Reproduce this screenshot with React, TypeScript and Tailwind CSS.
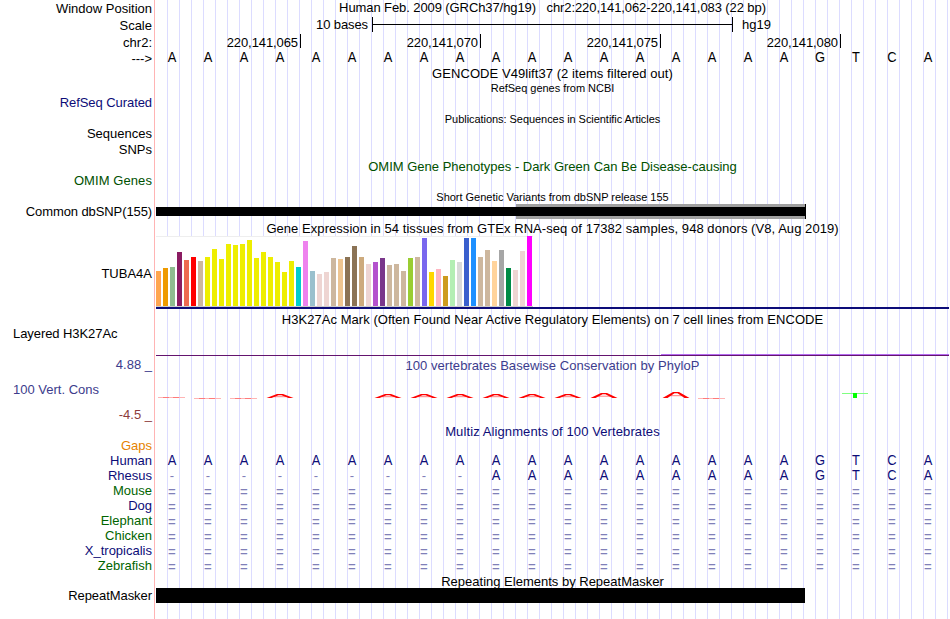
import clsx from "clsx";
import type { ReactNode } from "react";

const SEQUENCE = "AAAAAAAAAAAAAAAAAAGTCA".split("");
const RHESUS = "---------AAAAAAAAAGTCA".split("");
const UNALIGNED = "======================".split("");

const COORDINATES = ["220,141,065", "220,141,070", "220,141,075", "220,141,080"];

const SPECIES = [
  { name: "Human", color: "text-[#0c0c78]", bases: SEQUENCE },
  { name: "Rhesus", color: "text-[#0c0c78]", bases: RHESUS },
  { name: "Mouse", color: "text-[#006400]", bases: UNALIGNED },
  { name: "Dog", color: "text-[#0c0c78]", bases: UNALIGNED },
  { name: "Elephant", color: "text-[#006400]", bases: UNALIGNED },
  { name: "Chicken", color: "text-[#006400]", bases: UNALIGNED },
  { name: "X_tropicalis", color: "text-[#0c0c78]", bases: UNALIGNED },
  { name: "Zebrafish", color: "text-[#006400]", bases: UNALIGNED },
];

// [bar height in px, tissue colour]
const TISSUES: [number, string][] = [
  [35, "#ffa54f"], [38, "#ee9a00"], [39, "#8fbc8f"], [54, "#8b1c62"],
  [46, "#ee6a50"], [49, "#ff0000"], [45, "#cdb79e"], [49, "#eeee00"],
  [57, "#eeee00"], [47, "#eeee00"], [62, "#eeee00"], [61, "#eeee00"],
  [62, "#eeee00"], [66, "#eeee00"], [48, "#eeee00"], [54, "#eeee00"],
  [49, "#eeee00"], [44, "#eeee00"], [34, "#eeee00"], [45, "#eeee00"],
  [39, "#00cdcd"], [65, "#ee82ee"], [35, "#9ac0cd"], [32, "#eed5d2"],
  [34, "#eed5d2"], [48, "#cdb79e"], [47, "#eec591"], [49, "#8b7355"],
  [60, "#8b7355"], [49, "#cdaa7d"], [42, "#eed5d2"], [44, "#b452cd"],
  [48, "#7a378b"], [41, "#cdb79e"], [42, "#cdb79e"], [35, "#cdb79e"],
  [48, "#9acd32"], [49, "#cdb79e"], [68, "#7a67ee"], [34, "#ffd700"],
  [37, "#ffb6c1"], [30, "#cd9b1d"], [46, "#b4eeb4"], [44, "#d9d9d9"],
  [68, "#3a5fcd"], [68, "#1e90ff"], [49, "#cdb79e"], [56, "#cdb79e"],
  [45, "#ffd39b"], [56, "#a6a6a6"], [38, "#008b45"], [36, "#eed5d2"],
  [55, "#eed5d2"], [70, "#ff00ff"],
];

// [base index, peak height in px]
const PEAKS: [number, number][] = [
  [3, 4], [6, 4], [7, 4], [8, 4], [9, 4], [10, 4], [11, 4], [12, 5], [14, 6],
];

// [base index, y]
const FLATS: [number, number][] = [[0, 24], [1, 25], [2, 25], [15, 25]];

type RowProps = {
  height: string;
  label?: ReactNode;
  labelClass?: string;
  children?: ReactNode;
};

function Row({ height, label, labelClass, children }: RowProps) {
  return (
    <div className={clsx("flex shrink-0", height)}>
      <div
        className={clsx(
          "flex w-[156px] shrink-0 items-center justify-end pr-1 whitespace-pre",
          labelClass,
        )}
      >
        {label}
      </div>
      <div className="flex w-[793px] shrink-0 flex-col justify-center">
        {children}
      </div>
    </div>
  );
}

function Title({ className, children }: { className?: string; children: ReactNode }) {
  return (
    <div className={clsx("text-center whitespace-pre", className)}>{children}</div>
  );
}

function baseClass(base: string) {
  if (base === "=") return "scale-x-95 pt-[4px] text-[14px] text-[#8080b8]";
  if (base === "-") return "text-[#8080b8]";
  return "scale-x-92 text-[14px]";
}

function Bases({ bases, className }: { bases: string[]; className?: string }) {
  return (
    <div className={clsx("-ml-[2px] grid w-[792px] grid-cols-22 text-center", className)}>
      {bases.map((base, i) => (
        <span key={i} className={baseClass(base)}>
          {base}
        </span>
      ))}
    </div>
  );
}

function ScaleBar() {
  return (
    <div className="flex h-full items-start">
      <span className="w-[212px] text-right tracking-[-0.1px]">10 bases</span>
      <div className="ml-1 flex h-[15px] w-[361px] items-center border-x border-black">
        <div className="h-px w-full bg-black" />
      </div>
      <span className="ml-[9px]">hg19</span>
    </div>
  );
}

function Ruler() {
  return (
    <div className="flex h-full items-start">
      {COORDINATES.map((position, i) => (
        <div
          key={position}
          className={clsx(
            "flex h-[14px] items-center justify-end border-r border-black pr-[2px] pt-[2px] tracking-[-0.09px]",
            i === 0 ? "w-[145px]" : "w-[180px]",
          )}
        >
          {position}
        </div>
      ))}
    </div>
  );
}

function Expression() {
  return (
    <div className="flex h-full flex-col">
      <div className="flex h-[71px] w-[377px] items-end gap-[2px] border-b border-[#ccc] bg-white shadow-[inset_0_1px_0_#eee]">
        {TISSUES.map(([height, color], i) => (
          <div
            key={i}
            className="w-[5px] shrink-0"
            style={{ height, backgroundColor: color }}
          />
        ))}
      </div>
      <div className="h-[2px] bg-[#0c0c78]" />
    </div>
  );
}

function Conservation() {
  return (
    <svg width="793" height="34" viewBox="0 0 793 34" fill="none">
      {FLATS.map(([i, y]) => (
        <g key={i}>
          <path d={`M${2 + i * 36} ${y + 0.5}h27`} stroke="#ffb4b4" />
          <path d={`M${7 + i * 36} ${y + 0.5}h6m4 0h6`} stroke="#ff7a7a" />
        </g>
      ))}
      {PEAKS.map(([i, h]) => {
        const x = 3 + i * 36;
        const top = 25 - h;
        return (
          <g key={i} fill="#ff0000">
            <path
              d={`M${x - 0.5} 25L${x + 10} ${top}h6L${x + 26.5} 25h-5L${x + 14.5} ${top + 1.2}h-3L${x + 4.5} 25z`}
            />
            <path
              d={`M${x + 7} ${top + h / 2 + 0.7}h12`}
              stroke="#ff0000"
              strokeWidth="0.5"
            />
          </g>
        );
      })}
      <path d="M686 20.5h26" stroke="#80ff80" />
      <path d="M697 20h4v5h-4z" fill="#00ff00" />
    </svg>
  );
}

export default function App() {
  return (
    <main className="h-[619px] w-[950px] overflow-hidden bg-white font-['Liberation_Sans',Arial,sans-serif] text-[13px] leading-[15px] text-black">
      <div className="h-full w-[949px] bg-[linear-gradient(to_right,transparent_154px,#ffb4b4_154px_155px,#fff_155px_156px,transparent_156px),repeating-linear-gradient(to_right,transparent_0_11px,#dcdcff_11px_12px)]">
        <div className="flex h-full flex-col bg-[linear-gradient(to_right,#fff_154px,transparent_154px)]">
          <Row height="h-[17px]" label="Window Position">
            <Title className="pb-[2px] tracking-[-0.09px]">
              {"Human Feb. 2009 (GRCh37/hg19)   chr2:220,141,062-220,141,083 (22 bp)"}
            </Title>
          </Row>
          <Row height="h-[17px]" label="Scale">
            <ScaleBar />
          </Row>
          <Row height="h-[17px]" label="chr2:">
            <Ruler />
          </Row>
          <Row height="h-[15px]" label="--->">
            <Bases bases={SEQUENCE} className="-mt-[3px]" />
          </Row>
          <Row height="h-[16px]">
            <Title className="pb-[2px] tracking-[0.06px]">
              GENCODE V49lift37 (2 items filtered out)
            </Title>
          </Row>
          <Row height="h-[13px]">
            <Title className="text-[11px] tracking-[-0.03px]">RefSeq genes from NCBI</Title>
          </Row>
          <Row
            height="h-[16px]"
            label="RefSeq Curated"
            labelClass="pb-[2px] tracking-[-0.07px] text-[#0c0c78]"
          />
          <Row height="h-[15px]">
            <Title className="pt-[2px] text-[11px] tracking-[-0.05px]">
              Publications: Sequences in Scientific Articles
            </Title>
          </Row>
          <Row height="h-[16px]" label="Sequences" labelClass="pb-[2px]" />
          <Row height="h-[16px]" label="SNPs" labelClass="pb-[2px]" />
          <Row height="h-[16px]">
            <Title className="text-[#005000]">
              OMIM Gene Phenotypes - Dark Green Can Be Disease-causing
            </Title>
          </Row>
          <Row
            height="h-[15px]"
            label="OMIM Genes"
            labelClass="pb-[2px] tracking-[0.08px] text-[#005000]"
          />
          <Row height="h-[15px]">
            <Title className="pt-[2px] text-[11px] tracking-[-0.02px]">
              Short Genetic Variants from dbSNP release 155
            </Title>
          </Row>
          <Row
            height="h-[15px]"
            label="Common dbSNP(155)"
            labelClass="tracking-[-0.1px]"
          >
            <div className="flex h-full w-[650px] items-center">
              <div className="h-[9px] w-[360px] bg-black" />
              <div className="flex h-full w-[290px] items-center border-r border-black bg-[#a0a0a0]">
                <div className="h-[9px] w-full bg-black" />
              </div>
            </div>
          </Row>
          <Row height="h-[17px]">
            <Title className="pt-[2px] tracking-[0.055px]">
              Gene Expression in 54 tissues from GTEx RNA-seq of 17382 samples, 948 donors (V8, Aug 2019)
            </Title>
          </Row>
          <Row height="h-[73px]" label="TUBA4A" labelClass="pt-[2px]">
            <Expression />
          </Row>
          <Row height="h-[18px]">
            <Title className="pt-[3px] tracking-[0.045px]">
              H3K27Ac Mark (Often Found Near Active Regulatory Elements) on 7 cell lines from ENCODE
            </Title>
          </Row>
          <Row
            height="h-[30px]"
            label={
              <span className="-mt-px mr-auto self-start pl-[13px] tracking-[-0.07px]">
                Layered H3K27Ac
              </span>
            }
          >
            <div className="flex h-full flex-col justify-end pb-px">
              <div className="ml-auto h-px w-[288px] bg-[#b469f0]" />
              <div className="h-px bg-[#64146e]" />
            </div>
          </Row>
          <Row height="h-[16px]" label="4.88 _" labelClass="pb-[2px] text-[#3c3c8c]">
            <Title className="tracking-[0.04px] text-[#3c3c8c]">
              100 vertebrates Basewise Conservation by PhyloP
            </Title>
          </Row>
          <Row
            height="h-[34px]"
            label={<span className="mr-auto pb-[2px] pl-[13px]">100 Vert. Cons</span>}
            labelClass="text-[#3c3c8c]"
          >
            <Conservation />
          </Row>
          <Row height="h-[16px]" label="-4.5 _" labelClass="pb-[2px] text-[#8c3c3c]" />
          <Row height="h-[15px]">
            <Title className="pt-px tracking-[0.1px] text-[#0c0c78]">
              Multiz Alignments of 100 Vertebrates
            </Title>
          </Row>
          <Row height="h-[15px]" label="Gaps" labelClass="text-[#e68200]" />
          {SPECIES.map(({ name, color, bases }) => (
            <Row key={name} height="h-[15px]" label={name} labelClass={color}>
              <Bases bases={bases} className="text-[#0c0c78]" />
            </Row>
          ))}
          <Row height="h-[15px]">
            <Title className="pt-[2px]">Repeating Elements by RepeatMasker</Title>
          </Row>
          <Row height="h-[15px]" label="RepeatMasker" labelClass="tracking-[-0.06px]">
            <div className="h-full w-[649px] bg-black" />
          </Row>
        </div>
      </div>
    </main>
  );
}
